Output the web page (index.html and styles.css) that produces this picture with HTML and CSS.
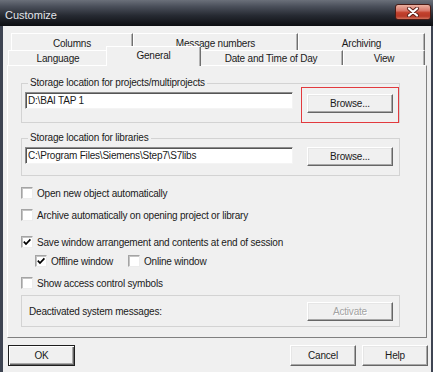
FILE: index.html
```html
<!DOCTYPE html>
<html>
<head>
<meta charset="utf-8">
<title>Customize</title>
<link rel="stylesheet" href="styles.css">
</head>
<body>
<div class="window">
  <div class="titlebar">
    <span class="title">Customize</span>
    <span class="close">
      <svg width="14" height="10" viewBox="0 0 14 10">
        <path d="M3 1.5 L11 8.5 M11 1.5 L3 8.5" stroke="#5a2018" stroke-width="4" stroke-linecap="round"/>
        <path d="M3 1.5 L11 8.5 M11 1.5 L3 8.5" stroke="#ffffff" stroke-width="2.2" stroke-linecap="round"/>
      </svg>
    </span>
  </div>
  <div class="client">
    <div class="tabs">
      <div class="tabrow row1">
        <div class="tab t-columns">Columns</div>
        <div class="tab t-messages">Message numbers</div>
        <div class="tab t-archiving">Archiving</div>
      </div>
      <div class="tabrow row2">
        <div class="tab t-language">Language</div>
        <div class="tab t-general selected">General</div>
        <div class="tab t-date">Date and Time of Day</div>
        <div class="tab t-view">View</div>
      </div>
    </div>
    <div class="panel">
      <fieldset class="group group-first">
        <legend>Storage location for projects/multiprojects</legend>
        <div class="field-row">
          <input class="path" type="text" value="D:\BAI TAP 1" readonly>
          <div class="browse-wrap">
            <button class="btn btn-browse">Browse...</button>
            <span class="mark"></span>
          </div>
        </div>
      </fieldset>
      <fieldset class="group group-second">
        <legend>Storage location for libraries</legend>
        <div class="field-row">
          <input class="path" type="text" value="C:\Program Files\Siemens\Step7\S7libs" readonly>
          <button class="btn btn-browse btn-flush">Browse...</button>
        </div>
      </fieldset>

      <div class="check c1"><span class="box"></span><span>Open new object automatically</span></div>
      <div class="check c2"><span class="box"></span><span>Archive automatically on opening project or library</span></div>
      <div class="check c3"><span class="box checked"><svg width="10" height="10" viewBox="0 0 10 10"><path d="M1.8 4.6 L4 7 L8.4 2.4" fill="none" stroke="#000" stroke-width="1.7"/></svg></span><span>Save window arrangement and contents at end of session</span></div>
      <div class="check sub">
        <span class="box checked"><svg width="10" height="10" viewBox="0 0 10 10"><path d="M1.8 4.6 L4 7 L8.4 2.4" fill="none" stroke="#000" stroke-width="1.7"/></svg></span><span class="sub-label">Offline window</span>
        <span class="box"></span><span>Online window</span>
      </div>
      <div class="check c4"><span class="box"></span><span>Show access control symbols</span></div>

      <div class="group-plain">
        <span>Deactivated system messages:</span>
        <button class="btn btn-browse disabled">Activate</button>
      </div>
    </div>
    <div class="actions">
      <button class="btn btn-action btn-default">OK</button>
      <button class="btn btn-action btn-cancel">Cancel</button>
      <button class="btn btn-action">Help</button>
    </div>
  </div>
</div>
</body>
</html>
```
FILE: styles.css
```css
* { box-sizing: border-box; }
html, body { margin: 0; padding: 0; }
body {
  width: 433px;
  height: 372px;
  overflow: hidden;
  background: #f0f0f0;
  font-family: "Liberation Sans", Arial, sans-serif;
  font-size: 10px;
  letter-spacing: -0.2px;
  color: #1a1a1a;
}
.window {
  height: 372px;
  display: flex;
  flex-direction: column;
}
.titlebar {
  height: 26px;
  flex: none;
  display: flex;
  align-items: center;
  justify-content: space-between;
  padding: 0 2px 0 5px;
  background: linear-gradient(#6b707a 0, #4a4f5a 25%, #262a32 60%, #0d0e12 100%);
}
.title {
  color: #e2e5ea;
  font-size: 11px;
  letter-spacing: 0;
  margin-top: 4px;
}
.close {
  width: 36px;
  height: 16px;
  margin-top: -2px;
  border: 1px solid #4a1c16;
  border-radius: 3px;
  background: linear-gradient(#eab0a0 0, #d8786a 40%, #c2402c 55%, #b83a28 80%, #d2705a 100%);
  display: flex;
  align-items: center;
  justify-content: center;
}
.client {
  flex: 1;
  border-left: 3px solid #3e4452;
  border-right: 2px solid #3e4452;
  padding: 7px 0 0 4px;
}
.tabs {
  display: flex;
  flex-direction: column;
  margin-bottom: -1px;
}
.tabrow { display: flex; }
.row1 {
  height: 17px;
  margin-left: 4px;
}
.row2 {
  height: 20px;
  margin-top: -4px;
  margin-left: 1px;
  align-items: flex-end;
}
.tab {
  display: flex;
  align-items: center;
  justify-content: center;
  background: #f0f0f0;
  border-top: 1px solid #ffffff;
  border-left: 1px solid #ffffff;
  border-right: 1px solid #707070;
  box-shadow: inset -1px 0 0 #b4b4b4;
}
.row1 .tab { height: 17px; padding-top: 2px; }
.row2 .tab { height: 15px; margin-bottom: 1px; padding-top: 1px; }
.t-columns { width: 122px; }
.t-messages { width: 165px; }
.t-archiving { width: 127px; }
.t-language { width: 100px; }
.t-general { width: 95px; }
.t-date { width: 144px; }
.t-view { width: 82px; }
.row2 .tab.selected {
  height: 20px;
  margin: 0 -2px;
  padding-top: 0;
  padding-bottom: 2px;
  position: relative;
  z-index: 2;
}
.panel {
  width: 420px;
  height: 273px;
  border: 1px solid;
  border-color: #ffffff #808080 #808080 #ffffff;
  padding: 0 0 0 13px;
  display: flex;
  flex-direction: column;
}
.group {
  width: 379px;
  margin: 11px 0 0 0;
  padding: 3px 6px 9px 3px;
  border: 1px solid #d3d3d3;
  min-width: 0;
}
.group-second { margin-top: 9px; }
.group legend {
  padding: 0 2px;
  margin-left: 3px;
  line-height: 12px;
  height: 12px;
}
.field-row {
  display: flex;
  justify-content: space-between;
  align-items: flex-start;
}
.path {
  width: 268px;
  height: 17px;
  margin: 0;
  padding: 0 2px;
  font: inherit;
  letter-spacing: inherit;
  color: #1a1a1a;
  background: #ffffff;
  border: 1px solid;
  border-color: #8c8c8c #f4f4f4 #f4f4f4 #8c8c8c;
  box-shadow: inset 1px 1px 0 #555555;
  outline: none;
}
.btn {
  font: inherit;
  letter-spacing: inherit;
  color: #1a1a1a;
  background: #f0f0f0;
  border: 1px solid;
  border-color: #ffffff #666666 #666666 #ffffff;
  box-shadow: inset -1px -1px 0 #a8a8a8, inset 1px 1px 0 #e6e6e6;
  padding: 0;
  text-align: center;
}
.btn-browse {
  width: 86px;
  height: 19px;
  display: block;
}
.browse-wrap {
  position: relative;
  margin-top: 2px;
}
.mark {
  position: absolute;
  left: -6px;
  right: -6px;
  top: -7px;
  bottom: -10px;
  border: 1px solid #e23a3e;
}
.check {
  display: flex;
  align-items: center;
  height: 14px;
  gap: 4px;
}
.c1 { margin-top: 10px; }
.c2 { margin-top: 8px; }
.c3 { margin-top: 13px; }
.sub { margin-top: 5px; padding-left: 14px; }
.sub-label { width: 73px; }
.c4 { margin-top: 8px; }
.box {
  width: 12px;
  height: 12px;
  flex: none;
  background: #ffffff;
  border: 1px solid;
  border-color: #a4a4a4 #ececec #ececec #a4a4a4;
  box-shadow: inset 1px 1px 0 #c4c4c4;
  display: flex;
  align-items: center;
  justify-content: center;
}
.group-plain {
  width: 379px;
  height: 32px;
  margin-top: 5px;
  border: 1px solid #d3d3d3;
  padding: 5px 6px 5px 7px;
  display: flex;
  justify-content: space-between;
  align-items: center;
}
.disabled {
  color: #a3a3a3;
  text-shadow: 1px 1px 0 #ffffff;
}
.actions {
  display: flex;
  width: 421px;
  margin-top: 7px;
  padding-left: 1px;
  gap: 6px;
}
.btn-action {
  width: 66px;
  height: 21px;
}
.btn-default {
  width: 67px;
  border-color: #1e1e1e;
  box-shadow: inset 1px 1px 0 #ffffff, inset -1px -1px 0 #666666, inset -2px -2px 0 #a8a8a8;
}
.btn-cancel { margin-left: auto; }
```
